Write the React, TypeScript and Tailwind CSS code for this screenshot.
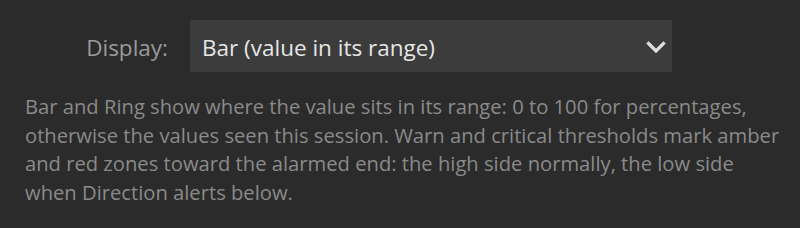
import React from "react";

export default function App() {
  return (
    <div className="w-[800px] h-[228px] bg-[#2b2b2b] overflow-hidden" style={{ fontFamily: '"Open Sans", "Noto Sans", sans-serif' }}>
      <div className="flex items-center pt-[20px]">
        <div className="w-[168px] text-right text-[22.5px] text-[#9a9a9a] mt-[4px]">Display:</div>
        <div className="ml-[22px] w-[482px] h-[52px] bg-[#3c3c3c] flex items-center justify-between pl-[12px] pr-[6px]">
          <span className="text-[22.5px] text-[#e6e6e6] mt-[4px]">Bar (value in its range)</span>
          <svg width="20" height="13" viewBox="0 0 20 13" className="mt-[2px]">
            <path d="M2.5 2.5 L10 10 L17.5 2.5" fill="none" stroke="#e0e0e0" strokeWidth="3.2" strokeLinecap="square" />
          </svg>
        </div>
      </div>
      <p className="mt-[20px] pl-[25px] text-[20.2px] leading-[28.5px] text-[#8a8a8a] whitespace-nowrap">
        Bar and Ring show where the value sits in its range: 0 to 100 for percentages,
        <br />
        otherwise the values seen this session. Warn and critical thresholds mark amber
        <br />
        and red zones toward the alarmed end: the high side normally, the low side
        <br />
        when Direction alerts below.
      </p>
    </div>
  );
}
